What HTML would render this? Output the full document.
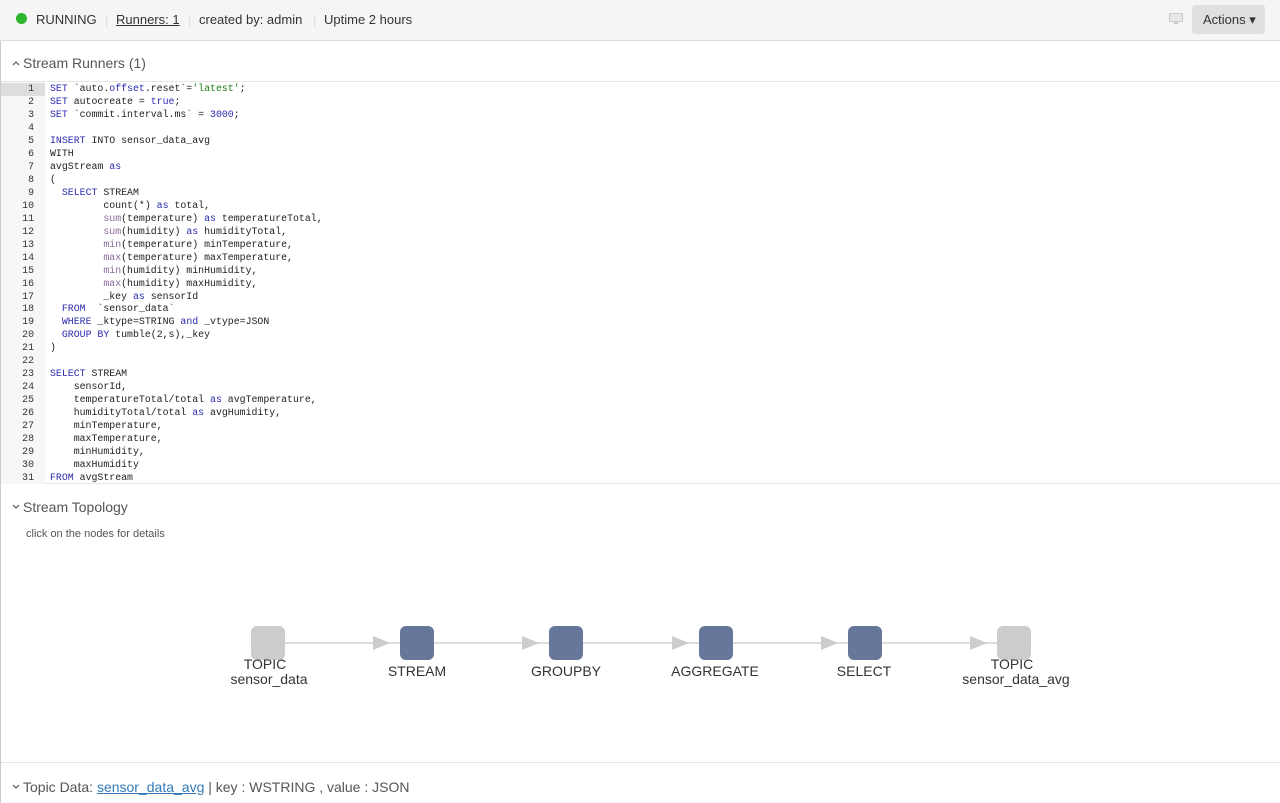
<!DOCTYPE html>
<html><head><meta charset="utf-8"><style>
*{margin:0;padding:0;box-sizing:border-box}
body{width:1280px;height:803px;overflow:hidden;background:#fff;font-family:"Liberation Sans",Arial,sans-serif;color:#333;position:relative}
.top{position:absolute;left:0;top:0;width:1280px;height:41px;background:#f5f5f5;border-bottom:1px solid #ddd;font-size:13px}
.top span{position:absolute;top:12px}
.sep{color:#ddd}
.dot{position:absolute;left:16px;top:13px;width:11px;height:11px;border-radius:50%;background:#2db52d}
.act{position:absolute;left:1192px;top:5px;width:73px;height:29px;background:#e0e0e0;border-radius:3px;font-size:13px;line-height:29px;padding-left:11px;color:#333}
.lb{position:absolute;left:0;top:41px;width:1px;height:762px;background:#ccc}
.sh{position:absolute;left:12px;font-size:14px;color:#555}
.sh svg{vertical-align:middle;margin-right:3px;position:relative;top:-1px}
.hr{position:absolute;left:1px;width:1279px;height:1px;background:#e6e6e6}
.code{position:absolute;left:1px;top:82px;width:1279px;height:402px;border-bottom:1px solid #e6e6e6}
.gut{position:absolute;left:0;top:0;width:44px;height:402px;background:#f7f7f7}
pre{position:absolute;top:0;font-family:"Liberation Mono",monospace;font-size:9.9px;line-height:12.97px;padding-top:1px}
.ln{left:0;width:33px;text-align:right;color:#333}
.src{left:49px;color:#222}
.k{color:#2a2ab0}.s{color:#1a801a}.n{color:#2a2ab0}.f{color:#8a6a9a}
</style></head><body>
<div class="top">
<div class="dot"></div>
<span style="left:36px">RUNNING</span>
<span class="sep" style="left:105px">|</span>
<span style="left:116px;text-decoration:underline">Runners: 1</span>
<span class="sep" style="left:188px">|</span>
<span style="left:199px">created by: admin</span>
<span class="sep" style="left:313px">|</span>
<span style="left:324px">Uptime 2 hours</span>
<svg style="position:absolute;left:1169px;top:13px" width="14" height="12"><rect x="0.5" y="0.5" width="13" height="8" fill="#e8e8e8" stroke="#ccc"/><rect x="5" y="9" width="4" height="2" fill="#ccc"/></svg>
<div class="act">Actions &#9662;</div>
</div>
<div class="lb"></div>
<div class="sh" style="top:55px"><svg width="8" height="6"><path d="M1 5 L4 2 L7 5" fill="none" stroke="#555" stroke-width="1.2"/></svg>Stream Runners (1)</div>
<div class="hr" style="top:81px"></div>
<div class="code"><div class="gut"></div><div style="position:absolute;left:0;top:1px;width:44px;height:13px;background:#ddd"></div>
<pre class="ln">1
2
3
4
5
6
7
8
9
10
11
12
13
14
15
16
17
18
19
20
21
22
23
24
25
26
27
28
29
30
31</pre>
<pre class="src"><span class="k">SET</span> `auto.<span class="k">offset</span>.reset`=<span class="s">'latest'</span>;
<span class="k">SET</span> autocreate = <span class="k">true</span>;
<span class="k">SET</span> `commit.interval.ms` = <span class="n">3000</span>;

<span class="k">INSERT</span> INTO sensor_data_avg
WITH
avgStream <span class="k">as</span>
(
  <span class="k">SELECT</span> STREAM
         count(*) <span class="k">as</span> total,
         <span class="f">sum</span>(temperature) <span class="k">as</span> temperatureTotal,
         <span class="f">sum</span>(humidity) <span class="k">as</span> humidityTotal,
         <span class="f">min</span>(temperature) minTemperature,
         <span class="f">max</span>(temperature) maxTemperature,
         <span class="f">min</span>(humidity) minHumidity,
         <span class="f">max</span>(humidity) maxHumidity,
         _key <span class="k">as</span> sensorId
  <span class="k">FROM</span>  `sensor_data`
  <span class="k">WHERE</span> _ktype=STRING <span class="k">and</span> _vtype=JSON
  <span class="k">GROUP BY</span> tumble(2,s),_key
)

<span class="k">SELECT</span> STREAM
    sensorId,
    temperatureTotal/total <span class="k">as</span> avgTemperature,
    humidityTotal/total <span class="k">as</span> avgHumidity,
    minTemperature,
    maxTemperature,
    minHumidity,
    maxHumidity
<span class="k">FROM</span> avgStream</pre>
</div>
<div class="sh" style="top:499px"><svg width="8" height="6"><path d="M1 1 L4 4 L7 1" fill="none" stroke="#555" stroke-width="1.2"/></svg>Stream Topology</div>
<div style="position:absolute;left:26px;top:528px;font-size:11px;color:#555">click on the nodes for details</div>
<svg style="position:absolute;left:0;top:600px" width="1280" height="100" font-family="Liberation Sans,Arial,sans-serif" font-size="14" fill="#333" text-anchor="middle">
<g stroke="#ddd" stroke-width="2"><line x1="285" y1="43" x2="997" y2="43"/></g>
<g fill="#ccc">
<polygon points="373,36 390,43 373,50"/><polygon points="522,36 539,43 522,50"/><polygon points="672,36 689,43 672,50"/><polygon points="821,36 838,43 821,50"/><polygon points="970,36 987,43 970,50"/>
</g>
<rect x="251" y="26" width="34" height="34" rx="6" fill="#ccc"/>
<rect x="400" y="26" width="34" height="34" rx="6" fill="#667799"/>
<rect x="549" y="26" width="34" height="34" rx="6" fill="#667799"/>
<rect x="699" y="26" width="34" height="34" rx="6" fill="#667799"/>
<rect x="848" y="26" width="34" height="34" rx="6" fill="#667799"/>
<rect x="997" y="26" width="34" height="34" rx="6" fill="#ccc"/>
<text x="265" y="69">TOPIC</text><text x="269" y="84">sensor_data</text>
<text x="417" y="76">STREAM</text>
<text x="566" y="76">GROUPBY</text>
<text x="715" y="76">AGGREGATE</text>
<text x="864" y="76">SELECT</text>
<text x="1012" y="69">TOPIC</text><text x="1016" y="84">sensor_data_avg</text>
</svg>
<div class="hr" style="top:762px"></div>
<div class="sh" style="top:779px"><svg width="8" height="6"><path d="M1 1 L4 4 L7 1" fill="none" stroke="#555" stroke-width="1.2"/></svg>Topic Data: <span style="color:#337ab7;text-decoration:underline">sensor_data_avg</span> | key : WSTRING , value : JSON</div>
</body></html>
